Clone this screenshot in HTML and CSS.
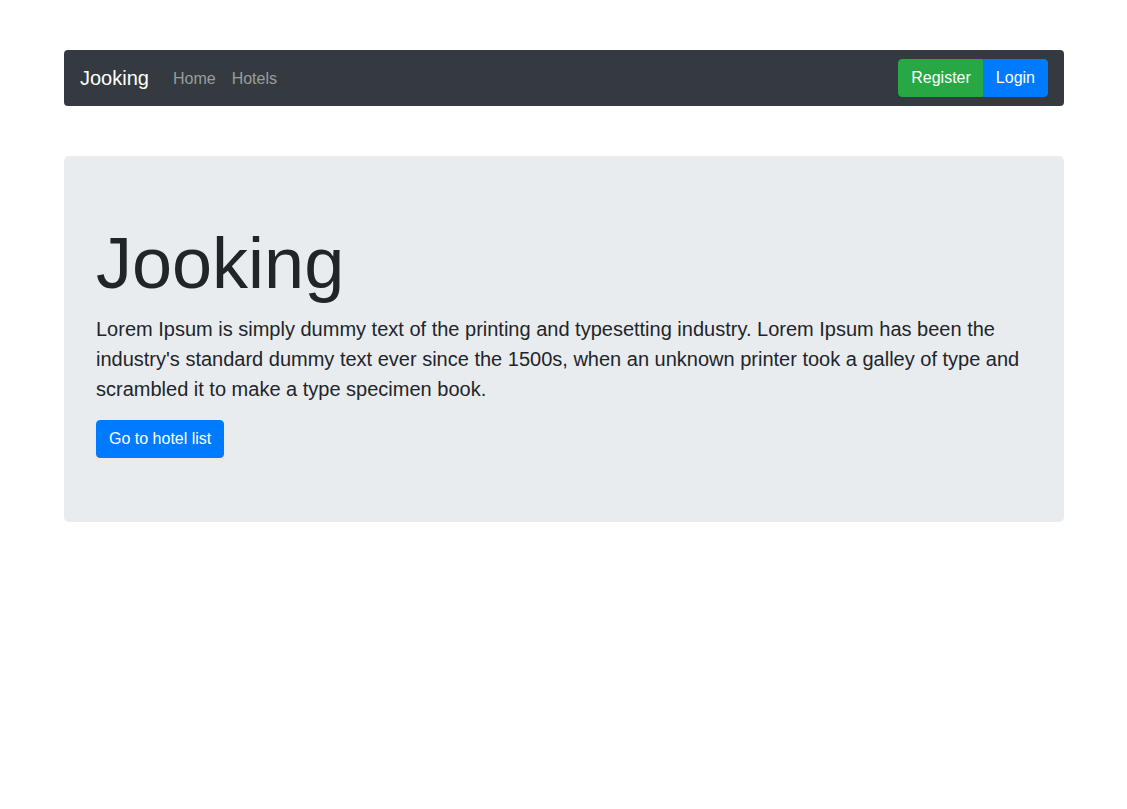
FILE: index.html
```html
<!DOCTYPE html>
<html lang="en">
<head>
<meta charset="utf-8">
<title>Jooking</title>
<link rel="stylesheet" href="styles.css">
</head>
<body>
<div class="container">
  <nav class="navbar">
    <a class="brand" href="#">Jooking</a>
    <ul class="nav-links">
      <li><a href="#">Home</a></li>
      <li><a href="#">Hotels</a></li>
    </ul>
    <div class="btn-group">
      <a class="btn btn-success" href="#">Register</a>
      <a class="btn btn-primary" href="#">Login</a>
    </div>
  </nav>
  <section class="jumbotron">
    <h1 class="display">Jooking</h1>
    <p class="lead">Lorem Ipsum is simply dummy text of the printing and typesetting industry. Lorem Ipsum has been the industry's standard dummy text ever since the 1500s, when an unknown printer took a galley of type and scrambled it to make a type specimen book.</p>
    <a class="btn btn-primary btn-single" href="#">Go to hotel list</a>
  </section>
</div>
</body>
</html>
```
FILE: styles.css
```css
* { box-sizing: border-box; }
html, body {
  margin: 0;
  padding: 0;
  background: #fff;
  font-family: "Liberation Sans", Arial, sans-serif;
  font-size: 16px;
  line-height: 1.5;
  color: #212529;
}
a { text-decoration: none; }
.container {
  width: 1000px;
  margin: 50px auto 0 64px;
}
.navbar {
  display: flex;
  align-items: center;
  background: #343a40;
  border-radius: 4px;
  padding: 8px 16px;
  height: 56px;
}
.brand {
  color: #fff;
  font-size: 20px;
  line-height: 30px;
  padding: 5px 0;
  margin-right: 16px;
}
.nav-links {
  display: flex;
  list-style: none;
  margin: 0;
  padding: 0;
  flex: 1;
}
.nav-links a {
  display: block;
  padding: 9px 8px 7px;
  color: rgba(255,255,255,.5);
}
.btn-group { display: flex; }
.btn {
  display: inline-block;
  padding: 6px 12px;
  font-size: 16px;
  line-height: 24px;
  color: #fff;
  border: 1px solid transparent;
}
.btn-success {
  background: #28a745;
  border-color: #28a745;
  border-radius: 4px 0 0 4px;
  padding: 6px 11px 6px 12px;
  margin-left: 1px;
}
.btn-primary { background: #007bff; border-color: #007bff; border-radius: 0 4px 4px 0; }
.btn-single { border-radius: 4px; }
.jumbotron {
  margin-top: 50px;
  background: #e9ecef;
  border-radius: 4.8px;
  padding: 64px 32px;
}
.display {
  margin: 0 0 8px;
  font-size: 72px;
  font-weight: 300;
  line-height: 1.2;
}
.lead {
  margin: 0 0 16px;
  font-size: 20px;
  line-height: 30px;
  font-weight: 300;
}
```
